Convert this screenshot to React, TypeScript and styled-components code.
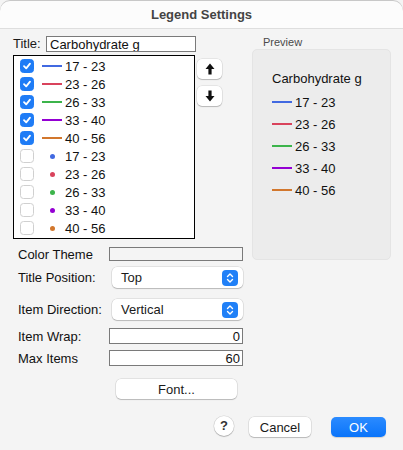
import React, { useState } from "react";
import styled, { createGlobalStyle } from "styled-components";

type Item = { label: string; color: string; kind: "line" | "dot"; checked: boolean };

const COLORS = ["#4169e1", "#d9435c", "#3cb44b", "#9400d3", "#d2772d"];
const RANGES = ["17 - 23", "23 - 26", "26 - 33", "33 - 40", "40 - 56"];

const initialItems: Item[] = [
  ...RANGES.map((label, i) => ({ label, color: COLORS[i], kind: "line" as const, checked: true })),
  ...RANGES.map((label, i) => ({ label, color: COLORS[i], kind: "dot" as const, checked: false })),
];

function CheckMark() {
  return (
    <svg width="10" height="10" viewBox="0 0 10 10">
      <path d="M2 5.2 L4.2 7.4 L8 2.6" fill="none" stroke="#fff" strokeWidth="1.8" strokeLinecap="round" strokeLinejoin="round" />
    </svg>
  );
}

function Arrow({ down }: { down?: boolean }) {
  return (
    <svg width="10" height="12" viewBox="0 0 10 12" style={{ transform: down ? "rotate(180deg)" : undefined }}>
      <path d="M5 0.5 L9.5 6 L6.6 6 L6.6 11.5 L3.4 11.5 L3.4 6 L0.5 6 Z" fill="#111" />
    </svg>
  );
}

function Stepper() {
  return (
    <StepBox>
      <svg width="8" height="12" viewBox="0 0 8 12">
        <path d="M1.5 4.5 L4 2 L6.5 4.5 M1.5 7.5 L4 10 L6.5 7.5" fill="none" stroke="#fff" strokeWidth="1.4" strokeLinecap="round" strokeLinejoin="round" />
      </svg>
    </StepBox>
  );
}

export default function App() {
  const [items, setItems] = useState<Item[]>(initialItems);
  const [title, setTitle] = useState("Carbohydrate g");

  const toggle = (i: number) =>
    setItems((prev) => prev.map((it, j) => (j === i ? { ...it, checked: !it.checked } : it)));

  const visible = items.filter((it) => it.checked);

  return (
    <>
      <GlobalStyle />
      <Window>
        <TitleBar>Legend Settings</TitleBar>
        <Body>
          <Main>
            <LeftColumn>
              <TitleRow>
                <Label>Title:</Label>
                <TitleInput value={title} onChange={(e) => setTitle(e.target.value)} />
              </TitleRow>
              <ListRow>
                <ListBox>
                  {items.map((it, i) => (
                    <ListItem key={i} onClick={() => toggle(i)}>
                      <Check $checked={it.checked}>{it.checked && <CheckMark />}</Check>
                      <SwatchSlot>
                        {it.kind === "line" ? <LineSwatch $color={it.color} /> : <DotSwatch $color={it.color} />}
                      </SwatchSlot>
                      <ItemText>{it.label}</ItemText>
                    </ListItem>
                  ))}
                </ListBox>
                <ArrowColumn>
                  <ArrowButton>
                    <Arrow />
                  </ArrowButton>
                  <ArrowButton>
                    <Arrow down />
                  </ArrowButton>
                </ArrowColumn>
              </ListRow>

              <Form>
                <FormRow $height={14} $top={8}>
                  <FormLabel>Color Theme</FormLabel>
                  <ThemeField />
                </FormRow>
                <FormRow $height={21} $top={6}>
                  <FormLabel>Title Position:</FormLabel>
                  <Select>
                    <span>Top</span>
                    <Stepper />
                  </Select>
                </FormRow>
                <FormRow $height={21} $top={11}>
                  <FormLabel>Item Direction:</FormLabel>
                  <Select>
                    <span>Vertical</span>
                    <Stepper />
                  </Select>
                </FormRow>
                <FormRow $height={16} $top={8}>
                  <FormLabel>Item Wrap:</FormLabel>
                  <NumberField defaultValue="0" />
                </FormRow>
                <FormRow $height={16} $top={6}>
                  <FormLabel>Max Items</FormLabel>
                  <NumberField defaultValue="60" />
                </FormRow>
              </Form>

              <FontButton>Font...</FontButton>
            </LeftColumn>

            <RightColumn>
              <PreviewLabel>Preview</PreviewLabel>
              <PreviewBox>
                <PreviewTitle>{title}</PreviewTitle>
                {visible.map((it, i) => (
                  <PreviewItem key={i}>
                    {it.kind === "line" ? <PreviewLine $color={it.color} /> : <PreviewDot $color={it.color} />}
                    <span>{it.label}</span>
                  </PreviewItem>
                ))}
              </PreviewBox>
            </RightColumn>
          </Main>

          <ButtonBar>
            <HelpButton>?</HelpButton>
            <PushButton $width={62}>Cancel</PushButton>
            <PrimaryButton>OK</PrimaryButton>
          </ButtonBar>
        </Body>
      </Window>
    </>
  );
}

const GlobalStyle = createGlobalStyle`
  html, body {
    margin: 0;
    padding: 0;
    background: #f4f4f4;
  }
  body {
    font-family: "Liberation Sans", Arial, sans-serif;
    font-size: 13px;
    color: #1a1a1a;
  }
`;

const Window = styled.div`
  width: 403px;
  height: 450px;
  display: flex;
  flex-direction: column;
  background: #f4f4f4;
  overflow: hidden;
`;

const TitleBar = styled.div`
  height: 29px;
  flex-shrink: 0;
  display: flex;
  align-items: center;
  justify-content: center;
  background: #fcfcfc;
  border-bottom: 1px solid #dedede;
  border-radius: 10px 10px 0 0;
  box-shadow: inset 0 1px 0 #c8c8c8;
  font-weight: bold;
  color: #444;
  padding-top: 1px;
  box-sizing: border-box;
`;

const Body = styled.div`
  flex: 1;
  display: flex;
  flex-direction: column;
  padding: 7px 0 0 13px;
`;

const Main = styled.div`
  display: flex;
  align-items: flex-start;
`;

const LeftColumn = styled.div`
  width: 231px;
  display: flex;
  flex-direction: column;
`;

const TitleRow = styled.div`
  display: flex;
  align-items: center;
  height: 16px;
`;

const Label = styled.span`
  width: 33px;
  line-height: 16px;
`;

const TitleInput = styled.input`
  width: 150px;
  height: 16px;
  box-sizing: border-box;
  border: 1px solid #7a7a7a;
  background: #fff;
  padding: 0 3px;
  font: inherit;
  font-size: 13px;
  color: #111;
  outline: none;
`;

const ListRow = styled.div`
  display: flex;
  margin-top: 3px;
`;

const ListBox = styled.div`
  width: 182px;
  height: 184px;
  box-sizing: border-box;
  border: 1px solid #000;
  background: #fff;
  padding: 1px 0 0 6px;
`;

const ListItem = styled.div`
  height: 18px;
  display: flex;
  align-items: center;
  cursor: default;
`;

const Check = styled.span<{ $checked: boolean }>`
  width: 14px;
  height: 14px;
  box-sizing: border-box;
  border-radius: 3.5px;
  display: flex;
  align-items: center;
  justify-content: center;
  background: ${({ $checked }) => ($checked ? "#1f7cf6" : "#fff")};
  border: 1px solid ${({ $checked }) => ($checked ? "#1f7cf6" : "#d0d0d0")};
`;

const SwatchSlot = styled.span`
  width: 20px;
  margin-left: 8px;
  display: flex;
  align-items: center;
  justify-content: center;
`;

const LineSwatch = styled.span<{ $color: string }>`
  width: 20px;
  height: 2px;
  background: ${({ $color }) => $color};
`;

const DotSwatch = styled.span<{ $color: string }>`
  width: 5px;
  height: 5px;
  border-radius: 50%;
  background: ${({ $color }) => $color};
`;

const ItemText = styled.span`
  margin-left: 3px;
  color: #111;
`;

const ArrowColumn = styled.div`
  display: flex;
  flex-direction: column;
  gap: 7px;
  margin-left: 2px;
  padding-top: 4px;
`;

const ArrowButton = styled.button`
  width: 25px;
  height: 20px;
  padding: 0;
  display: flex;
  align-items: center;
  justify-content: center;
  background: #fff;
  border: none;
  border-radius: 5px;
  box-shadow: 0 0 0 0.5px rgba(0, 0, 0, 0.12), 0 1px 1px rgba(0, 0, 0, 0.2);
`;

const Form = styled.div`
  display: flex;
  flex-direction: column;
`;

const FormRow = styled.div<{ $height: number; $top: number }>`
  display: flex;
  align-items: center;
  height: ${({ $height }) => $height}px;
  margin-top: ${({ $top }) => $top}px;
  padding-left: 5px;
`;

const FormLabel = styled.span`
  width: 91px;
  flex-shrink: 0;
  color: #111;
`;

const ThemeField = styled.div`
  width: 134px;
  height: 14px;
  box-sizing: border-box;
  border: 1px solid #7a7a7a;
  background: #f4f4f4;
`;

const Select = styled.div`
  width: 131px;
  height: 21px;
  margin-left: 3px;
  box-sizing: border-box;
  display: flex;
  align-items: center;
  justify-content: space-between;
  padding: 0 5px 0 9px;
  background: #fff;
  border-radius: 5px;
  box-shadow: 0 0 0 0.5px rgba(0, 0, 0, 0.14), 0 1px 1px rgba(0, 0, 0, 0.18);
  color: #1a1a1a;
`;

const StepBox = styled.span`
  width: 16px;
  height: 16px;
  border-radius: 4px;
  background: #2080f7;
  display: flex;
  align-items: center;
  justify-content: center;
`;

const NumberField = styled.input`
  width: 134px;
  height: 16px;
  box-sizing: border-box;
  border: 1px solid #7a7a7a;
  background: #fff;
  padding: 0 2px;
  font: inherit;
  font-size: 13px;
  color: #111;
  text-align: right;
  outline: none;
`;

const PushButton = styled.button<{ $width: number }>`
  width: ${({ $width }) => $width}px;
  height: 20px;
  padding: 0;
  background: #fff;
  border: none;
  border-radius: 5px;
  box-shadow: 0 0 0 0.5px rgba(0, 0, 0, 0.14), 0 1px 1px rgba(0, 0, 0, 0.18);
  font-family: "Liberation Sans", Arial, sans-serif;
  font-size: 13px;
  color: #1a1a1a;
`;

const FontButton = styled(PushButton).attrs({ $width: 121 })`
  margin-top: 13px;
  margin-left: 103px;
`;

const RightColumn = styled.div`
  width: 139px;
  margin-left: 8px;
  display: flex;
  flex-direction: column;
`;

const PreviewLabel = styled.div`
  height: 13px;
  padding-left: 11px;
  font-size: 11px;
  color: #4a4a4a;
  line-height: 13px;
`;

const PreviewBox = styled.div`
  height: 211px;
  box-sizing: border-box;
  background: #ececec;
  border: 1px solid #e4e4e4;
  border-radius: 5px;
  padding: 21px 0 0 19px;
  display: flex;
  flex-direction: column;
`;

const PreviewTitle = styled.div`
  height: 16px;
  line-height: 16px;
  margin-bottom: 4px;
  color: #111;
`;

const PreviewItem = styled.div`
  height: 22px;
  display: flex;
  align-items: center;
  color: #111;
  gap: 3px;
`;

const PreviewLine = styled.span<{ $color: string }>`
  width: 20px;
  height: 2px;
  background: ${({ $color }) => $color};
`;

const PreviewDot = styled.span<{ $color: string }>`
  width: 5px;
  height: 5px;
  margin: 0 7px;
  border-radius: 50%;
  background: ${({ $color }) => $color};
`;

const ButtonBar = styled.div`
  display: flex;
  align-items: center;
  justify-content: flex-end;
  margin-top: 18px;
  padding-right: 17px;
`;

const HelpButton = styled.button`
  width: 20px;
  height: 20px;
  padding: 0;
  border: none;
  border-radius: 50%;
  background: #fff;
  box-shadow: 0 0 0 0.5px rgba(0, 0, 0, 0.14), 0 1px 1px rgba(0, 0, 0, 0.2);
  font-family: "Liberation Sans", Arial, sans-serif;
  font-size: 13px;
  font-weight: bold;
  color: #333;
  margin-right: 15px;
  margin-top: -3px;
`;

const PrimaryButton = styled.button`
  width: 55px;
  height: 20px;
  margin-left: 20px;
  padding: 0;
  border: none;
  border-radius: 5px;
  background: linear-gradient(#2b8bff, #0a74fa);
  box-shadow: 0 1px 1px rgba(0, 0, 0, 0.15);
  font-family: "Liberation Sans", Arial, sans-serif;
  font-size: 13px;
  color: #fff;
`;
